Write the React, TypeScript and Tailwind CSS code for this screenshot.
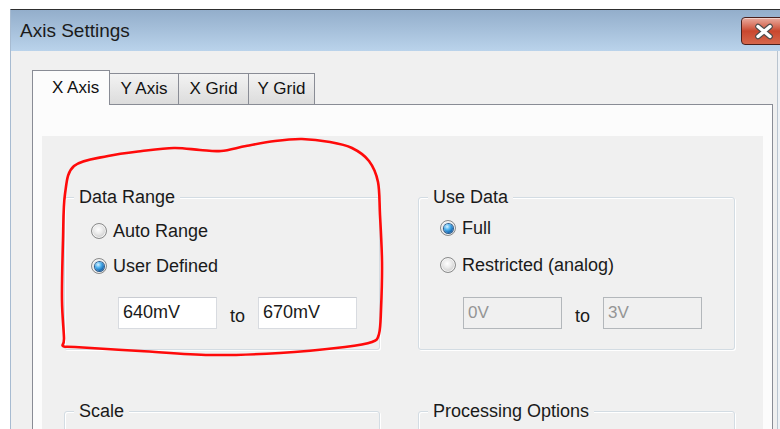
import React from "react";

type Pt = [number, number];

// closed Catmull-Rom loop -> cubic bezier path
function smoothLoop(pts: Pt[]) {
  const n = pts.length;
  let d = `M${pts[0][0]},${pts[0][1]}`;
  for (let i = 0; i < n; i++) {
    const p0 = pts[(i - 1 + n) % n];
    const p1 = pts[i];
    const p2 = pts[(i + 1) % n];
    const p3 = pts[(i + 2) % n];
    const c1x = p1[0] + (p2[0] - p0[0]) / 6;
    const c1y = p1[1] + (p2[1] - p0[1]) / 6;
    const c2x = p2[0] - (p3[0] - p1[0]) / 6;
    const c2y = p2[1] - (p3[1] - p1[1]) / 6;
    d += ` C${c1x.toFixed(1)},${c1y.toFixed(1)} ${c2x.toFixed(1)},${c2y.toFixed(1)} ${p2[0]},${p2[1]}`;
  }
  return d;
}

const loop: Pt[] = [
  [74, 166], [108, 156], [142, 151], [174, 148], [200, 150], [221, 151],
  [246, 146], [275, 141], [302, 139], [330, 142], [352, 148], [369, 161],
  [378, 182], [380, 215], [382, 262], [381, 310], [379, 334], [372, 342],
  [345, 347], [280, 353], [210, 355], [140, 351], [75, 347], [63, 346],
  [64, 338], [62, 300], [63, 240], [65, 194],
];

function Radio({ checked, label }: { checked?: boolean; label: string }) {
  return (
    <div className="flex h-[22px] items-center gap-[6px]">
      <div className="flex h-[16px] w-[16px] items-center justify-center rounded-full border border-[#8a8b8b] bg-[radial-gradient(circle_at_45%_40%,#ffffff_0%,#ececec_35%,#c2c2c2_85%,#b0b0b0_100%)] shadow-[inset_0_0_0_1px_#f4f4f4]">
        {checked && (
          <div className="h-[9px] w-[9px] rounded-full bg-[radial-gradient(circle_at_35%_30%,#d9f3ff_0%,#4fb3f0_35%,#1466b0_72%,#0b3f78_100%)] shadow-[0_0_0_1px_#2f5f8f]" />
        )}
      </div>
      <span className="text-[18px] leading-[22px] text-[#1a1a1a]">{label}</span>
    </div>
  );
}

function Field({ value, disabled }: { value: string; disabled?: boolean }) {
  return (
    <div
      className={
        disabled
          ? "flex h-[32px] w-[99px] items-center border border-[#b3b7bb] bg-[#f0f0f0] pl-[4px] text-[17px] text-[#959595]"
          : "flex h-[32px] w-[99px] items-center border border-[#d8dbe0] border-t-[#c9ccd2] bg-white pl-[4px] text-[18px] text-[#1a1a1a]"
      }
    >
      {value}
    </div>
  );
}

function Legend({ children }: { children: React.ReactNode }) {
  return (
    <legend className="ml-[9px] bg-[#f0f0f0] px-[5px] text-[18px] leading-[20px] text-[#1a1a1a]">
      {children}
    </legend>
  );
}

const group =
  "rounded-[3px] border border-[#d3dce3] shadow-[inset_1px_1px_0_#ffffff,1px_1px_0_#ffffff]";

export default function App() {
  return (
    <div className="relative h-[429px] w-[780px] overflow-hidden bg-white font-['Liberation_Sans',Arial,sans-serif]">
      {/* window frame */}
      <div className="ml-[10px] mt-[9px] w-[790px] border-l border-t border-l-[#a7bbd1] border-t-[#2e2e2e]">
        {/* caption */}
        <div className="flex h-[41px] items-start bg-gradient-to-b from-[#93aecb] to-[#bad3eb] pl-[9px] pt-[7px]">
          <div className="flex h-[28px] items-center text-[19px] text-[#1b1b1b]">Axis Settings</div>
          <div className="ml-auto mr-[14px] flex h-[28px] w-[45px] items-center justify-center rounded-[4px] border border-[#4a201c] bg-gradient-to-b from-[#e8ab9f] via-[#c9472e] to-[#d6664b] shadow-[inset_0_1px_0_#f4cfc7]">
            <svg width="20" height="17" viewBox="0 0 20 17">
              <path d="M4 3.5 L16 13.5 M16 3.5 L4 13.5" stroke="#4c4c4c" strokeWidth="5.6" strokeLinecap="round" />
              <path d="M4 3.5 L16 13.5 M16 3.5 L4 13.5" stroke="#ffffff" strokeWidth="3.4" strokeLinecap="round" />
            </svg>
          </div>
        </div>

        {/* client area */}
        <div className="flex">
          <div className="h-[378px] w-[767px] border-r border-[#b9c4cf] bg-[#f0f0f0] pl-[21px] pt-[19px]">
            {/* tabs */}
            <div className="flex h-[34px] items-end">
              <div className="relative z-10 mb-[-1px] flex h-[35px] w-[78px] items-center border border-b-0 border-[#898c95] bg-[#fcfcfc] pl-[19px] text-[17px] text-[#111]">
                X Axis
              </div>
              <div className="flex h-[31px] w-[69px] items-center justify-center border-r border-t border-[#898c95] bg-gradient-to-b from-[#f3f3f3] to-[#dcdcdc] text-[17px] text-[#111]">
                Y Axis
              </div>
              <div className="flex h-[31px] w-[70px] items-center justify-center border-r border-t border-[#898c95] bg-gradient-to-b from-[#f3f3f3] to-[#dcdcdc] text-[17px] text-[#111]">
                X Grid
              </div>
              <div className="flex h-[31px] w-[66px] items-center justify-center border-r border-t border-[#898c95] bg-gradient-to-b from-[#f3f3f3] to-[#dcdcdc] text-[17px] text-[#111]">
                Y Grid
              </div>
            </div>

            {/* tab page */}
            <div className="h-[400px] w-[741px] border border-[#898c95] bg-[#fcfcfc] px-[9px] pt-[31px]">
              <div className="grid h-[400px] grid-cols-[316px_317px] content-start gap-x-[38px] gap-y-[51px] bg-[#f0f0f0] pl-[22px] pt-[51px]">
                <fieldset className={group}>
                  <Legend>Data Range</Legend>
                  <div className="flex flex-col gap-[13px] pl-[26px] pt-[13px]">
                    <Radio label="Auto Range" />
                    <Radio checked label="User Defined" />
                  </div>
                  <div className="mt-[18px] flex items-center gap-[13px] pb-[19px] pl-[53px]">
                    <Field value="640mV" />
                    <span className="pt-[8px] text-[18px] text-[#1a1a1a]">to</span>
                    <Field value="670mV" />
                  </div>
                </fieldset>

                <fieldset className={group}>
                  <Legend>Use Data</Legend>
                  <div className="flex flex-col gap-[15px] pl-[21px] pt-[10px]">
                    <Radio checked label="Full" />
                    <Radio label="Restricted (analog)" />
                  </div>
                  <div className="mt-[19px] flex items-center gap-[13px] pb-[19px] pl-[44px]">
                    <Field value="0V" disabled />
                    <span className="pt-[8px] text-[18px] text-[#1a1a1a]">to</span>
                    <Field value="3V" disabled />
                  </div>
                </fieldset>

                <fieldset className={group}>
                  <Legend>Scale</Legend>
                  <div className="h-[80px]" />
                </fieldset>

                <fieldset className={group}>
                  <Legend>Processing Options</Legend>
                  <div className="h-[80px]" />
                </fieldset>
              </div>
            </div>
          </div>
          <div className="flex-1 bg-[#eef2f6]" />
        </div>
      </div>

      {/* red marker loop drawn over the dialog */}
      <svg className="pointer-events-none absolute left-0 top-0" width="780" height="429">
        <path d={smoothLoop(loop)} fill="none" stroke="#ff0a0a" strokeWidth="2.6" strokeLinejoin="round" />
      </svg>
    </div>
  );
}
